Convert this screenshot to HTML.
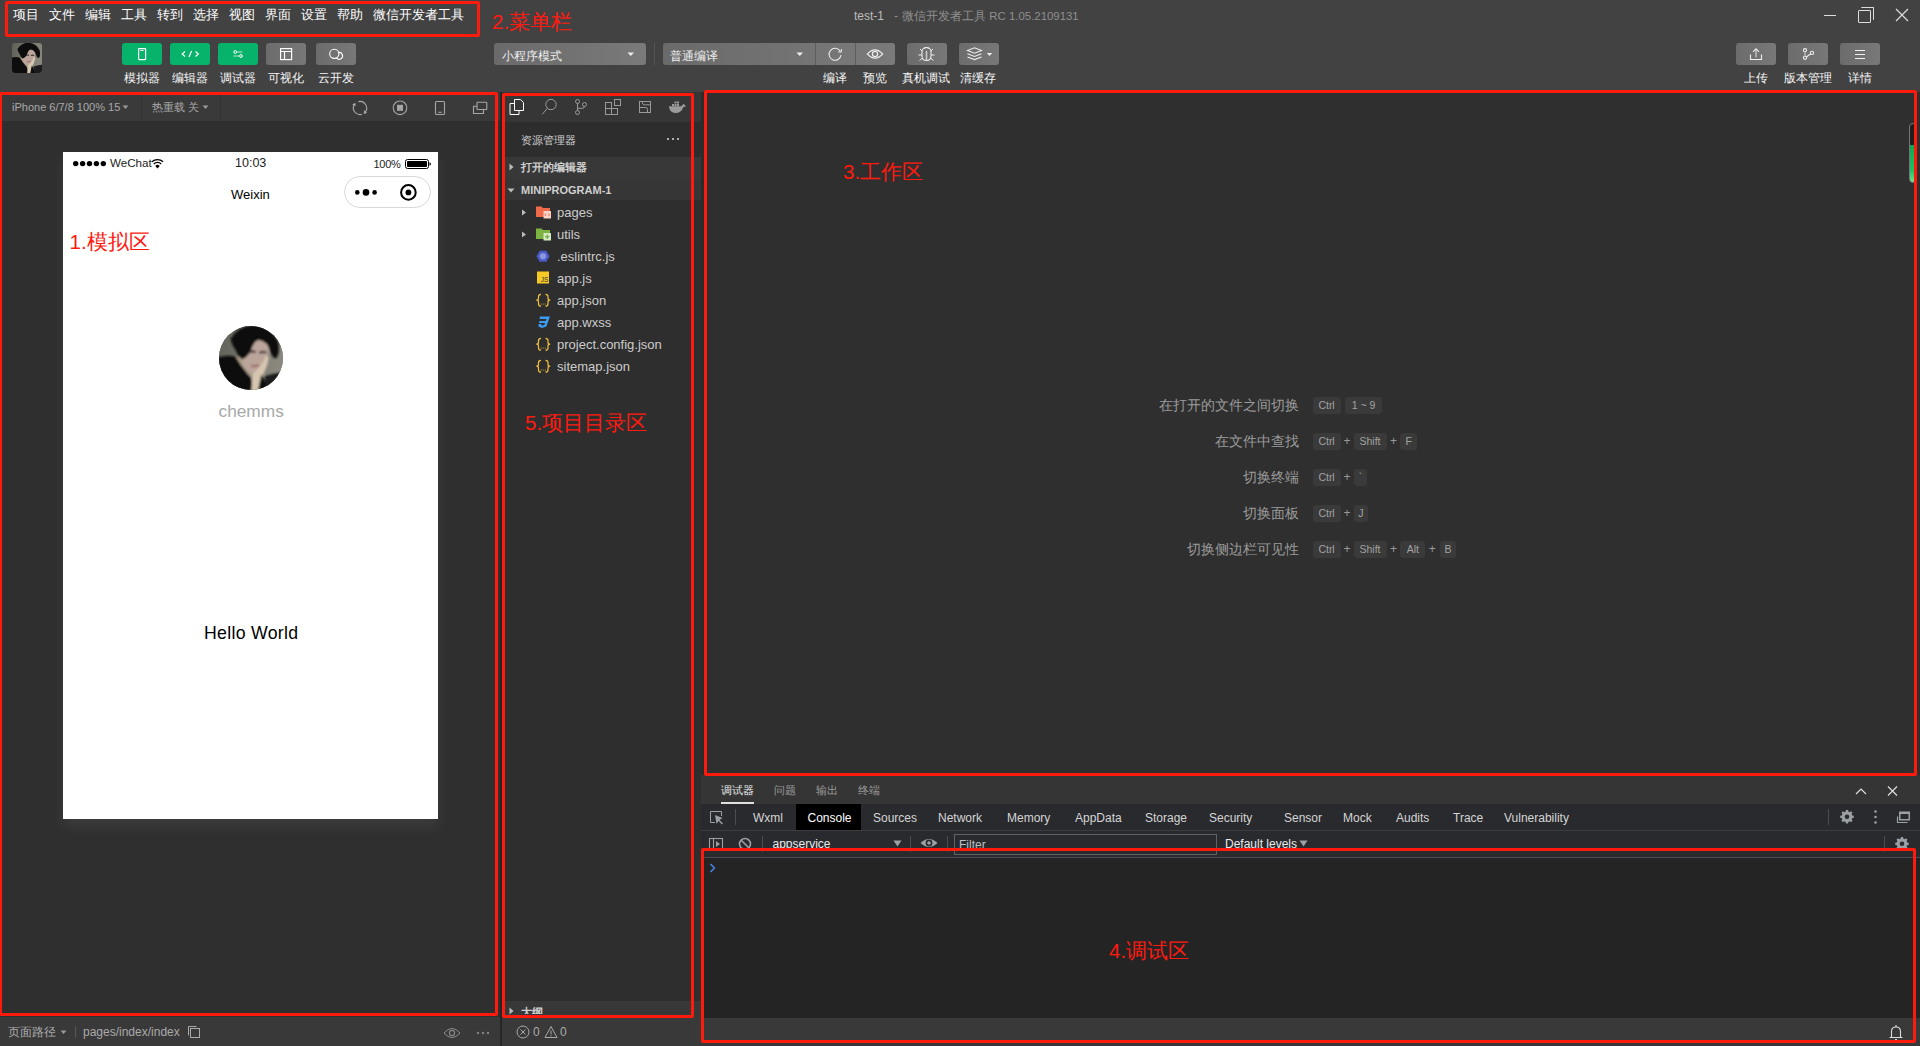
<!DOCTYPE html>
<html><head><meta charset="utf-8">
<style>
*{box-sizing:border-box}
html,body{margin:0;padding:0;width:1920px;height:1046px;overflow:hidden;background:#2f2f2f;font-family:"Liberation Sans",sans-serif;color:#ccc}
.a{position:absolute}
.t{position:absolute;white-space:nowrap;line-height:1}
.btn{position:absolute;top:43px;width:40px;height:22px;border-radius:3px;background:linear-gradient(90deg,#6c6c6c,#787878)}
.g{background:#07b36a}
.lbl{position:absolute;top:72px;font-size:12px;color:#f6f6f6;white-space:nowrap;line-height:12px;transform:translateX(-50%)}
.redbox{position:absolute;border:3px solid #ff1a0e;border-radius:2px}
.redlbl{position:absolute;color:#ff1a10;font-size:20.5px;line-height:1;white-space:nowrap}
.key{position:absolute;height:17px;border-radius:3px;background:#3a3a3a;color:#a3a3a3;font-size:10.5px;line-height:17px;text-align:center;white-space:nowrap}
.dt{top:812px;font-size:12px;color:#d5d5d5}
.menu span{position:absolute;top:8px;font-size:13px;line-height:13px;color:#fff}
</style></head><body>

<!-- header -->
<div class="a" style="left:0;top:0;width:1920px;height:92px;background:#424242"></div>
<div class="menu">
<span style="left:13px">项目</span><span style="left:49px">文件</span><span style="left:85px">编辑</span><span style="left:121px">工具</span><span style="left:157px">转到</span><span style="left:193px">选择</span><span style="left:229px">视图</span><span style="left:265px">界面</span><span style="left:301px">设置</span><span style="left:337px">帮助</span><span style="left:373px">微信开发者工具</span>
</div>
<div class="t" style="left:854px;top:10px;font-size:12px;color:#bdbdbd">test-1<span style="position:absolute;left:40px;color:#8f8f8f">-</span><span style="position:absolute;left:48px;color:#8f8f8f">微信开发者工具 <span style="font-size:11.4px">RC 1.05.2109131</span></span></div>

<!-- window controls -->
<div class="a" style="left:1824px;top:14.5px;width:12px;height:1.5px;background:#ddd"></div>
<div class="a" style="left:1858px;top:10px;width:13px;height:13px;border:1.5px solid #ddd;border-radius:1px"></div>
<div class="a" style="left:1861px;top:7px;width:13px;height:13px;border-top:1.5px solid #ddd;border-right:1.5px solid #ddd;border-radius:1px"></div>
<svg class="a" style="left:1895px;top:8px" width="14" height="14" viewBox="0 0 14 14"><path d="M1 1L13 13M13 1L1 13" stroke="#ddd" stroke-width="1.2"/></svg>

<!-- avatar -->
<div class="a" style="left:12px;top:43px;width:30px;height:30px;border-radius:3px;overflow:hidden">
<svg width="30" height="30" viewBox="0 0 100 100" preserveAspectRatio="none"><defs><filter id="blra" x="-10%" y="-10%" width="120%" height="120%"><feGaussianBlur stdDeviation="2.5"/></filter>
<linearGradient id="bgga" x1="0" y1="0" x2="1" y2="0.3"><stop offset="0" stop-color="#5f6058"/><stop offset="0.6" stop-color="#77776c"/><stop offset="1" stop-color="#8a887e"/></linearGradient></defs>
<rect width="100" height="100" fill="url(#bgga)"/>
<g filter="url(#blra)">
<path d="M72 78 Q85 74 105 72 L105 105 L70 105Z" fill="#1e1e1e"/>
<path d="M24 48 Q40 48 52 60 Q56 72 54 78 Q42 80 30 72Z" fill="#a99b86"/>
<path d="M40 26 Q60 14 76 26 Q80 45 74 62 Q66 76 52 74 Q40 70 36 56Z" fill="#bba59b"/>
<path d="M-5 50 Q12 44 26 48 Q34 62 44 74 Q52 80 56 105 L-5 105Z" fill="#0d0d0d"/>
<path d="M50 105 Q52 88 52 76 Q56 70 62 66 Q68 58 74 46 L78 50 Q74 70 66 80 Q62 88 66 105Z" fill="#d6c6b0"/>
<path d="M66 76 Q72 82 76 105 L60 105Z" fill="#0f0f0f"/>
<path d="M18 20 Q30 0 55 -2 Q82 2 92 24 Q96 40 90 50 Q84 52 80 40 Q76 24 62 22 Q54 24 50 38 Q44 50 36 52 Q30 48 26 38 Q20 30 18 20Z" fill="#0b0b0b"/>
<path d="M46 42 Q52 38 57 41" stroke="#3d302c" stroke-width="3.5" fill="none"/>
<path d="M63 42 Q69 39 74 42" stroke="#3d302c" stroke-width="3.5" fill="none"/>
<path d="M50 62 Q56 64 62 61" stroke="#9b6f6a" stroke-width="3.5" fill="none"/>
</g></svg>
</div>

<!-- toolbar left buttons -->
<div class="btn g" style="left:122px"></div>
<div class="btn g" style="left:170px"></div>
<div class="btn g" style="left:218px"></div>
<div class="btn" style="left:266px"></div>
<div class="btn" style="left:316px"></div>

<div class="lbl" style="left:142px">模拟器</div>
<div class="lbl" style="left:190px">编辑器</div>
<div class="lbl" style="left:238px">调试器</div>
<div class="lbl" style="left:286px">可视化</div>
<div class="lbl" style="left:336px">云开发</div>

<!-- dropdowns -->
<div class="a" style="left:494px;top:43px;width:152px;height:22px;border-radius:3px;background:linear-gradient(90deg,#6a6a6a,#7a7a7a)"></div>
<div class="t" style="left:502px;top:49.5px;font-size:12px;color:#eee">小程序模式</div>
<svg class="a" style="left:627px;top:52px" width="8" height="5"><path d="M0.5 0.5H7L3.75 4Z" fill="#eee"/></svg>
<div class="a" style="left:654px;top:43px;width:1px;height:22px;background:#555"></div>
<div class="a" style="left:663px;top:43px;width:232px;height:22px;border-radius:3px;background:linear-gradient(90deg,#6a6a6a,#7a7a7a)"></div>
<div class="a" style="left:815px;top:43px;width:1px;height:22px;background:#5e5e5e"></div>
<div class="a" style="left:855px;top:43px;width:1px;height:22px;background:#5e5e5e"></div>
<div class="t" style="left:670px;top:49.5px;font-size:12px;color:#eee">普通编译</div>
<svg class="a" style="left:796px;top:52px" width="8" height="5"><path d="M0.5 0.5H7L3.75 4Z" fill="#eee"/></svg>
<div class="btn" style="left:907px"></div>
<div class="btn" style="left:959px"></div>
<div class="lbl" style="left:835px">编译</div>
<div class="lbl" style="left:875px">预览</div>
<div class="lbl" style="left:926px">真机调试</div>
<div class="lbl" style="left:978px">清缓存</div>

<div class="btn" style="left:1736px"></div>
<div class="btn" style="left:1788px"></div>
<div class="btn" style="left:1840px"></div>
<svg class="a" style="left:1700px;top:0" width="220" height="92" viewBox="1700 0 220 92" fill="none" stroke="#f0f0f0" stroke-width="1.1">
<path d="M1750.5 54.5V59.5H1761.5V54.5"/>
<path d="M1756 57.2V49.5" stroke="#bbb" stroke-width="1.6"/>
<path d="M1753 51.8L1756 48.8L1759 51.8"/>
<circle cx="1805" cy="50.2" r="1.6"/><circle cx="1805" cy="57.8" r="1.6"/><circle cx="1812" cy="52.9" r="1.6"/>
<path d="M1805 51.8V56.2" stroke="#bbb" stroke-width="1.4"/><path d="M1806.4 57L1810.6 53.8"/>
<path d="M1855 50.5H1865M1855 54.5H1865M1855 58.5H1865"/>
</svg>
<div class="lbl" style="left:1756px">上传</div>
<div class="lbl" style="left:1808px">版本管理</div>
<div class="lbl" style="left:1860px">详情</div>

<svg class="a" style="left:0;top:0;z-index:2" width="1000" height="92" viewBox="0 0 1000 92" fill="none" stroke="#fff" stroke-width="1.2">
<rect x="138.6" y="48.6" width="7" height="11" rx="0.5"/>
<path d="M140.5 50.5H143.5" stroke-width="1"/>
<path d="M185 51.5L182.2 54L185 56.5M195.5 51.5L198.3 54L195.5 56.5M191.6 51L188.9 57"/>
<path d="M236.7 52H242.3M233.3 56H239.5" stroke="#bfe9d2" stroke-width="1"/>
<circle cx="235.2" cy="52" r="1.4" stroke-width="1"/><circle cx="241" cy="56" r="1.4" stroke-width="1"/>
<rect x="280.6" y="48.6" width="11" height="11"/>
<path d="M280.6 51.5H291.6M284.5 51.5V59.6"/>
<circle cx="334.3" cy="53.8" r="4.6" stroke-width="1.1"/><path d="M338.2 52.6A3.4 3.4 0 1 1 336.5 58" stroke-width="1.1"/>
<path d="M840.2 51.2A6 6 0 1 0 841 55" stroke="#ececec" stroke-width="1.1"/>
<path d="M838.3 51.8L841 52.2L841.6 49.2" stroke="#ececec" stroke-width="1.1"/>
<path d="M867.3 54Q875 45.8 882.7 54Q875 62.2 867.3 54Z" stroke="#ececec" stroke-width="1.1"/>
<circle cx="875" cy="54" r="2.6" stroke="#ececec" stroke-width="1.2"/>
<path d="M922 51.5A4.5 4 0 0 1 931 51.5V56Q931 60.5 926.5 60.5Q922 60.5 922 56Z" stroke="#ececec" stroke-width="1.1"/>
<path d="M926.5 51V60" stroke="#ccc" stroke-width="1.6"/>
<path d="M923.5 48.5Q926.5 46.5 929.5 48.5M920 49L922.2 51.2M933 49L930.8 51.2M918.5 55H922M931 55H934.5M919.5 60.5L922.5 58M933.5 60.5L930.5 58" stroke="#ececec" stroke-width="1"/>
<path d="M967.5 50.5L974.5 47.8L981.5 50.5L974.5 53.2Z" stroke="#ececec" stroke-width="1.1"/>
<path d="M967.5 53.7L974.5 56.4L981.5 53.7M967.5 56.9L974.5 59.6L981.5 56.9" stroke="#ececec" stroke-width="1.1"/>
<path d="M986.8 53H992.2L989.5 56Z" fill="#eee" stroke="none"/>
</svg>
<!-- simulator panel -->
<div class="a" style="left:0;top:92px;width:500px;height:30px;background:#3a3a3a"></div>
<div class="a" style="left:0;top:121px;width:500px;height:896px;background:#2f2f2f"></div>
<div class="t" style="left:12px;top:102px;font-size:11px;color:#a9a9a9">iPhone 6/7/8 100% 15</div>
<svg class="a" style="left:122px;top:105px" width="8" height="5"><path d="M0.5 0.5H6.5L3.5 4Z" fill="#999"/></svg>
<div class="a" style="left:141px;top:95px;width:1px;height:27px;background:#333"></div>
<div class="t" style="left:152px;top:102px;font-size:11px;color:#a9a9a9">热重载 关</div>
<svg class="a" style="left:202px;top:105px" width="8" height="5"><path d="M0.5 0.5H6.5L3.5 4Z" fill="#999"/></svg>
<div class="a" style="left:220px;top:95px;width:1px;height:27px;background:#333"></div>
<svg class="a" style="left:340px;top:92px" width="160" height="30" viewBox="340 92 160 30" fill="none" stroke="#a6a6a6" stroke-width="1.1">
<path d="M358.29 101.62A6.6 6.6 0 0 1 365.06 112.24"/><path d="M361.71 114.38A6.6 6.6 0 0 1 354.28 104.70"/>
<path d="M363.64 113.93L367.10 112.92L364.04 110.34Z" fill="#a6a6a6" stroke="none"/><path d="M355.38 102.79L352.15 104.39L355.62 106.39Z" fill="#a6a6a6" stroke="none"/>
<circle cx="400" cy="107.8" r="6.8"/><rect x="397" y="104.8" width="6" height="6" fill="#a6a6a6" stroke="none"/>
<rect x="435.5" y="101.5" width="9" height="13" rx="1"/><path d="M438.3 112.3H441.7"/>
<rect x="477" y="102.3" width="9.8" height="7.2" rx="0.5"/><path d="M477 106.3H473.5V113.5H483.5V109.5"/>
</svg>

<!-- phone -->
<div class="a" style="left:63px;top:152px;width:375px;height:667px;background:#fff;box-shadow:0 7px 14px rgba(255,255,255,.07)"></div>
<svg class="a" style="left:63px;top:152px" width="375" height="70" viewBox="63 152 375 70">
<circle cx="75.7" cy="163.6" r="2.7" fill="#000"/><circle cx="82.6" cy="163.6" r="2.7" fill="#000"/><circle cx="89.5" cy="163.6" r="2.7" fill="#000"/><circle cx="96.4" cy="163.6" r="2.7" fill="#000"/><circle cx="103.3" cy="163.6" r="2.7" fill="#000"/>
<path d="M152 161.8A8 8 0 0 1 163 161.8" stroke="#000" stroke-width="1.4" fill="none"/>
<path d="M153.8 163.9A5.2 5.2 0 0 1 161.2 163.9" stroke="#000" stroke-width="1.4" fill="none"/>
<path d="M155.3 166L157.5 168.4L159.7 166A3 3 0 0 0 155.3 166Z" fill="#000"/>
<rect x="405.5" y="159.5" width="23" height="9" rx="2" fill="none" stroke="#000" stroke-width="1"/>
<rect x="407" y="161" width="20" height="6" rx="0.8" fill="#000"/>
<path d="M429.5 162.2Q431 163 431 164Q431 165 429.5 165.8Z" fill="#000"/>
<rect x="344.5" y="176.5" width="86" height="31" rx="15.5" fill="#fff" stroke="#d9d9d9" stroke-width="1"/>
<circle cx="357.3" cy="192.4" r="2.3" fill="#000"/><circle cx="366" cy="192.4" r="3.3" fill="#000"/><circle cx="374.6" cy="192.4" r="2.3" fill="#000"/>
<circle cx="408.4" cy="192.4" r="7.3" fill="none" stroke="#000" stroke-width="2"/><circle cx="408.4" cy="192.4" r="2.9" fill="#000"/>
</svg>
<div class="t" style="left:110px;top:156.5px;font-size:11.6px;color:#222">WeChat</div>
<div class="t" style="left:235px;top:157px;font-size:12.5px;color:#222">10:03</div>
<div class="t" style="left:373.5px;top:158.5px;font-size:11px;letter-spacing:-0.3px;color:#222">100%</div>
<div class="t" style="left:231px;top:188px;font-size:13px;color:#000">Weixin</div>
<div class="a" style="left:219px;top:326px;width:64px;height:64px;border-radius:50%;overflow:hidden;background:#6f6d66">
<svg width="64" height="64" viewBox="0 0 100 100"><defs><filter id="blrb" x="-10%" y="-10%" width="120%" height="120%"><feGaussianBlur stdDeviation="1.5"/></filter>
<linearGradient id="bggb" x1="0" y1="0" x2="1" y2="0.3"><stop offset="0" stop-color="#5f6058"/><stop offset="0.6" stop-color="#77776c"/><stop offset="1" stop-color="#8a887e"/></linearGradient></defs>
<rect width="100" height="100" fill="url(#bggb)"/>
<g filter="url(#blrb)">
<path d="M72 78 Q85 74 105 72 L105 105 L70 105Z" fill="#1e1e1e"/>
<path d="M24 48 Q40 48 52 60 Q56 72 54 78 Q42 80 30 72Z" fill="#a99b86"/>
<path d="M40 26 Q60 14 76 26 Q80 45 74 62 Q66 76 52 74 Q40 70 36 56Z" fill="#bba59b"/>
<path d="M-5 50 Q12 44 26 48 Q34 62 44 74 Q52 80 56 105 L-5 105Z" fill="#0d0d0d"/>
<path d="M50 105 Q52 88 52 76 Q56 70 62 66 Q68 58 74 46 L78 50 Q74 70 66 80 Q62 88 66 105Z" fill="#d6c6b0"/>
<path d="M66 76 Q72 82 76 105 L60 105Z" fill="#0f0f0f"/>
<path d="M18 20 Q30 0 55 -2 Q82 2 92 24 Q96 40 90 50 Q84 52 80 40 Q76 24 62 22 Q54 24 50 38 Q44 50 36 52 Q30 48 26 38 Q20 30 18 20Z" fill="#0b0b0b"/>
<path d="M46 42 Q52 38 57 41" stroke="#3d302c" stroke-width="3.5" fill="none"/>
<path d="M63 42 Q69 39 74 42" stroke="#3d302c" stroke-width="3.5" fill="none"/>
<path d="M50 62 Q56 64 62 61" stroke="#9b6f6a" stroke-width="3.5" fill="none"/>
</g></svg></div>
<div class="t" style="left:218.5px;top:402.5px;font-size:17.3px;color:#a8a8a8">chemms</div>
<div class="t" style="left:204px;top:624.5px;font-size:17.7px;letter-spacing:0.3px;color:#000">Hello World</div>

<div class="a" style="left:0;top:1017px;width:500px;height:29px;background:#393939"></div>
<div class="t" style="left:8px;top:1026px;font-size:12px;color:#aaa">页面路径</div>
<svg class="a" style="left:60px;top:1030px" width="8" height="5"><path d="M0.5 0.5H6.5L3.5 4Z" fill="#999"/></svg>
<div class="a" style="left:75px;top:1026px;width:1px;height:12px;background:#555"></div>
<div class="t" style="left:83px;top:1026px;font-size:12px;color:#aaa">pages/index/index</div>
<svg class="a" style="left:187px;top:1025px" width="14" height="14" fill="none" stroke="#aaa" stroke-width="1"><path d="M1.5 10.5V1.5H9.5"/><rect x="3.5" y="3.5" width="9" height="9"/></svg>
<svg class="a" style="left:440px;top:1026px" width="60" height="14" fill="none" stroke="#8a8a8a" stroke-width="1"><path d="M4 7Q12 -2.2 20 7Q12 16.2 4 7Z"/><circle cx="12" cy="7" r="2.6" stroke-width="1.1"/><circle cx="38" cy="7" r="0.8" fill="#999"/><circle cx="43" cy="7" r="0.8" fill="#999"/><circle cx="48" cy="7" r="0.8" fill="#999"/></svg>
<div class="a" style="left:500px;top:92px;width:2px;height:954px;background:#262626"></div>

<!-- explorer -->
<div class="a" style="left:502px;top:92px;width:199px;height:30px;background:#363636"></div>
<div class="a" style="left:502px;top:122px;width:199px;height:35px;background:#2d2d2d"></div>
<div class="a" style="left:502px;top:157px;width:199px;height:22px;background:#383838"></div>
<div class="a" style="left:502px;top:179px;width:199px;height:21px;background:#363636"></div>
<div class="a" style="left:502px;top:200px;width:199px;height:801px;background:#2e2e2e"></div>
<div class="a" style="left:502px;top:1001px;width:199px;height:16px;background:#383838"></div>
<div class="a" style="left:502px;top:1017px;width:199px;height:29px;background:#393939"></div>
<div class="a" style="left:701px;top:92px;width:3px;height:925px;background:#2b2b2b"></div>
<svg class="a" style="left:502px;top:92px" width="198" height="30" viewBox="502 92 198 30" fill="none" stroke="#9a9a9a" stroke-width="1">
<path d="M514.5 103.5H510V114.5H519V110.5" stroke="#fff"/>
<path d="M514.5 110.5V99.5H520.5L523.5 102.5V110.5Z" stroke="#fff"/>
<circle cx="551" cy="104.5" r="5.2"/><path d="M547.3 108.3L542.3 114.3"/>
<circle cx="577.5" cy="101.5" r="2"/><circle cx="577.5" cy="112.5" r="2"/><circle cx="584.5" cy="104.5" r="2"/>
<path d="M577.5 103.5V110.5M584.5 106.5Q584.5 108.3 582.5 108.3H577.5"/>
<rect x="605.5" y="102.5" width="6" height="6"/><rect x="605.5" y="108.5" width="6" height="6"/><rect x="611.5" y="108.5" width="6" height="6"/><rect x="614.5" y="99.5" width="6" height="6"/>
<rect x="639.5" y="101.5" width="11" height="11"/>
<path d="M642.5 101.5V103Q642.5 104.8 644.5 104.8H650.5M639.5 107.5H645.5Q647.5 107.5 647.5 109.3V112.5" stroke-width="1"/>
<path d="M669 106.3H681.3L683.6 103.8L686 106.3L683.2 107.2Q681.5 113 675.5 113Q669.2 113 669 106.3Z" fill="#9a9a9a" stroke="none"/>
<rect x="672" y="104" width="2" height="2" fill="#9a9a9a" stroke="none"/><rect x="674.5" y="104" width="2" height="2" fill="#9a9a9a" stroke="none"/><rect x="677" y="104" width="2" height="2" fill="#9a9a9a" stroke="none"/><rect x="674.5" y="101.5" width="2" height="2" fill="#9a9a9a" stroke="none"/><rect x="677" y="101.5" width="2" height="2" fill="#9a9a9a" stroke="none"/>
</svg>
<div class="t" style="left:521px;top:135px;font-size:11px;color:#cfcfcf">资源管理器</div>
<svg class="a" style="left:665px;top:137px" width="18" height="4"><circle cx="3" cy="2" r="1" fill="#ddd"/><circle cx="8" cy="2" r="1" fill="#ddd"/><circle cx="13" cy="2" r="1" fill="#ddd"/></svg>
<svg class="a" style="left:508px;top:163px" width="8" height="8"><path d="M1.5 0.5L5.5 4L1.5 7.5Z" fill="#bbb"/></svg>
<div class="t" style="left:521px;top:162px;font-size:11px;font-weight:bold;color:#cfcfcf">打开的编辑器</div>
<svg class="a" style="left:507px;top:187px" width="8" height="8"><path d="M0.5 1.5H7.5L4 5.5Z" fill="#bbb"/></svg>
<div class="t" style="left:521px;top:185px;font-size:11px;font-weight:bold;color:#cfcfcf">MINIPROGRAM-1</div>

<svg class="a" style="left:520px;top:200px" width="40" height="180" viewBox="520 200 40 180">
<path d="M522 209.5L526 212.5L522 215.5Z" fill="#bbb"/>
<path d="M522 231.5L526 234.5L522 237.5Z" fill="#bbb"/>
<path d="M536 206.5H541.5L543 208H550V217H536Z" fill="#f06a4a"/>
<rect x="543.5" y="211" width="7.5" height="7.5" rx="0.5" fill="#fad2c6"/><path d="M546 213.5L545 214.8L546 216M548.5 213.5L549.5 214.8L548.5 216" stroke="#e44d30" stroke-width="0.8" fill="none"/>
<path d="M536 228.5H541.5L543 230H550V239H536Z" fill="#7cb342"/>
<rect x="543.5" y="233" width="7.5" height="7.5" rx="0.5" fill="#d6ebc4"/><path d="M547.2 234.5V239M545 236.8H549.5" stroke="#689f38" stroke-width="1" fill="none"/>
<path d="M536.5 256.3L539.7 250.8H546.3L549.5 256.3L546.3 261.8H539.7Z" fill="#4a5bc8"/><path d="M539.4 256.3L541.2 253.3H544.8L546.6 256.3L544.8 259.3H541.2Z" fill="#8b96e0"/>
<rect x="537" y="271.5" width="12" height="12" fill="#f7c926"/><text x="548.3" y="282.3" text-anchor="end" font-size="6.5" font-family="Liberation Sans" fill="#333">JS</text>
</svg>
<div class="t" style="left:557px;top:206px;font-size:13px;color:#cccccc">pages</div>
<div class="t" style="left:557px;top:228px;font-size:13px;color:#cccccc">utils</div>
<div class="t" style="left:557px;top:250px;font-size:13px;color:#cccccc">.eslintrc.js</div>
<div class="t" style="left:557px;top:272px;font-size:13px;color:#cccccc">app.js</div>
<svg class="a" style="left:0;top:0" width="700" height="400"><g transform="translate(0,0)"><path d="M541 294.3Q538.5 294.3 538.5 296.5V298.6Q538.5 300.2 536.3 300.2Q538.5 300.2 538.5 301.8V303.9Q538.5 306.1 541 306.1M545.5 294.3Q548 294.3 548 296.5V298.6Q548 300.2 550.2 300.2Q548 300.2 548 301.8V303.9Q548 306.1 545.5 306.1" fill="none" stroke="#f0c040" stroke-width="1.2"/><circle cx="541.3" cy="304" r="0.6" fill="#d8b050"/><circle cx="543.25" cy="304" r="0.6" fill="#d8b050"/><circle cx="545.2" cy="304" r="0.6" fill="#d8b050"/></g><g transform="translate(0,44)"><path d="M541 294.3Q538.5 294.3 538.5 296.5V298.6Q538.5 300.2 536.3 300.2Q538.5 300.2 538.5 301.8V303.9Q538.5 306.1 541 306.1M545.5 294.3Q548 294.3 548 296.5V298.6Q548 300.2 550.2 300.2Q548 300.2 548 301.8V303.9Q548 306.1 545.5 306.1" fill="none" stroke="#f0c040" stroke-width="1.2"/><circle cx="541.3" cy="304" r="0.6" fill="#d8b050"/><circle cx="543.25" cy="304" r="0.6" fill="#d8b050"/><circle cx="545.2" cy="304" r="0.6" fill="#d8b050"/></g><g transform="translate(0,66)"><path d="M541 294.3Q538.5 294.3 538.5 296.5V298.6Q538.5 300.2 536.3 300.2Q538.5 300.2 538.5 301.8V303.9Q538.5 306.1 541 306.1M545.5 294.3Q548 294.3 548 296.5V298.6Q548 300.2 550.2 300.2Q548 300.2 548 301.8V303.9Q548 306.1 545.5 306.1" fill="none" stroke="#f0c040" stroke-width="1.2"/><circle cx="541.3" cy="304" r="0.6" fill="#d8b050"/><circle cx="543.25" cy="304" r="0.6" fill="#d8b050"/><circle cx="545.2" cy="304" r="0.6" fill="#d8b050"/></g></svg>
<div class="t" style="left:557px;top:294px;font-size:13px;color:#cccccc">app.json</div>
<svg class="a" style="left:536px;top:315px;transform:skewX(-14deg)" width="15" height="14" viewBox="0 0 14 14"><path d="M2 1.5H12L11 11.5L7 13L3 11.5L2.8 9H5.2L5.4 10L7 10.6L8.6 10L8.8 8H2.8L2.6 6H9L9.2 4H2.3Z" fill="#3b9cf4"/></svg>
<div class="t" style="left:557px;top:316px;font-size:13px;color:#cccccc">app.wxss</div>
<div class="t" style="left:557px;top:338px;font-size:13px;color:#cccccc">project.config.json</div>
<div class="t" style="left:557px;top:360px;font-size:13px;color:#cccccc">sitemap.json</div>

<svg class="a" style="left:509px;top:1007px" width="6" height="8"><path d="M0.5 0.5L4.5 4L0.5 7.5Z" fill="#bbb"/></svg>
<div class="a" style="left:502px;top:1001px;width:192px;height:13px;overflow:hidden"><div class="t" style="left:19px;top:6px;font-size:11px;font-weight:bold;color:#cfcfcf">大纲</div></div>
<svg class="a" style="left:514px;top:1024px" width="60" height="16" fill="none" stroke="#aaa" stroke-width="1"><circle cx="9" cy="8" r="6"/><path d="M6.5 5.5L11.5 10.5M11.5 5.5L6.5 10.5"/><path d="M37 2.5L43 13.5H31Z"/><path d="M37 6.5V10.5M37 11.5V12.5"/></svg>
<div class="t" style="left:533px;top:1026px;font-size:12px;color:#aaa">0</div>
<div class="t" style="left:560px;top:1026px;font-size:12px;color:#aaa">0</div>

<!-- editor -->
<div class="a" style="left:704px;top:92px;width:1216px;height:683px;background:#2f2f2f"></div>
<div class="t" style="right:621.5px;top:398.6px;font-size:13.5px;color:#9b9b9b">在打开的文件之间切换</div>
<div class="key" style="left:1312.5px;top:396.9px;width:28.09999999999991px">Ctrl</div>
<div class="key" style="left:1345.4px;top:396.9px;width:36.299999999999955px">1 ~ 9</div>
<div class="t" style="right:621.5px;top:435.0px;font-size:13.5px;color:#9b9b9b">在文件中查找</div>
<div class="key" style="left:1312.5px;top:433.3px;width:28.09999999999991px">Ctrl</div>
<div class="t" style="left:1342.9px;top:435px;font-size:12px;color:#999;width:8px;text-align:center">+</div>
<div class="key" style="left:1353.5px;top:433.3px;width:33.0px">Shift</div>
<div class="t" style="left:1389.5px;top:435px;font-size:12px;color:#999;width:8px;text-align:center">+</div>
<div class="key" style="left:1400.4px;top:433.3px;width:16.59999999999991px">F</div>
<div class="t" style="right:621.5px;top:470.6px;font-size:13.5px;color:#9b9b9b">切换终端</div>
<div class="key" style="left:1312.5px;top:468.9px;width:28.09999999999991px">Ctrl</div>
<div class="t" style="left:1342.9px;top:470.6px;font-size:12px;color:#999;width:8px;text-align:center">+</div>
<div class="key" style="left:1353.5px;top:468.9px;width:13.799999999999955px">`</div>
<div class="t" style="right:621.5px;top:506.6px;font-size:13.5px;color:#9b9b9b">切换面板</div>
<div class="key" style="left:1312.5px;top:504.9px;width:28.09999999999991px">Ctrl</div>
<div class="t" style="left:1342.9px;top:506.6px;font-size:12px;color:#999;width:8px;text-align:center">+</div>
<div class="key" style="left:1353.5px;top:504.9px;width:14.5px">J</div>
<div class="t" style="right:621.5px;top:542.5px;font-size:13.5px;color:#9b9b9b">切换侧边栏可见性</div>
<div class="key" style="left:1312.5px;top:540.8px;width:28.09999999999991px">Ctrl</div>
<div class="t" style="left:1342.9px;top:542.5px;font-size:12px;color:#999;width:8px;text-align:center">+</div>
<div class="key" style="left:1353.5px;top:540.8px;width:33.0px">Shift</div>
<div class="t" style="left:1389.5px;top:542.5px;font-size:12px;color:#999;width:8px;text-align:center">+</div>
<div class="key" style="left:1400.4px;top:540.8px;width:25.0px">Alt</div>
<div class="t" style="left:1428.3px;top:542.5px;font-size:12px;color:#999;width:8px;text-align:center">+</div>
<div class="key" style="left:1439.6px;top:540.8px;width:16.65000000000009px">B</div>
<div class="a" style="left:1909px;top:123px;width:8px;height:60px;border-radius:4px;border:1px solid #777;background:linear-gradient(#1e1e1e 0,#1e1e1e 36%,#0fa84e 37%,#1fc060 80%,#6fe28f 100%)"></div>

<!-- debugger -->
<div class="a" style="left:701px;top:775px;width:1219px;height:29px;background:#353535"></div>
<div class="t" style="left:721px;top:785px;font-size:11px;color:#e8e8e8">调试器</div>
<div class="a" style="left:721px;top:802px;width:33px;height:2px;background:#e0e0e0"></div>
<div class="t" style="left:774px;top:785px;font-size:11px;color:#9a9a9a">问题</div>
<div class="t" style="left:816px;top:785px;font-size:11px;color:#9a9a9a">输出</div>
<div class="t" style="left:858px;top:785px;font-size:11px;color:#9a9a9a">终端</div>
<svg class="a" style="left:1850px;top:782px" width="60" height="18" fill="none" stroke="#ddd" stroke-width="1.2"><path d="M6 12L11 7L16 12"/><path d="M38 4.5L47 13.5M47 4.5L38 13.5"/></svg>

<div class="a" style="left:701px;top:804px;width:1219px;height:26px;background:#292a2d"></div>
<div class="a" style="left:796px;top:804px;width:65px;height:26px;background:#000"></div>
<svg class="a" style="left:705px;top:808px" width="30" height="20" fill="none" stroke="#9aa0a6" stroke-width="1"><path d="M10 14.5H5.5V3.5H16.5V8"/><path d="M10 7L11.5 16L13.5 13L17 16.5L18 15.5L14.5 12L17.5 10Z" fill="#9aa0a6" stroke="none"/></svg>
<div class="a" style="left:735px;top:809px;width:1px;height:16px;background:#4a4c50"></div>
<div class="t dt" style="left:753px">Wxml</div>
<div class="t dt" style="left:807.5px;color:#fff">Console</div>
<div class="t dt" style="left:873px">Sources</div>
<div class="t dt" style="left:938px">Network</div>
<div class="t dt" style="left:1007px">Memory</div>
<div class="t dt" style="left:1075px">AppData</div>
<div class="t dt" style="left:1145px">Storage</div>
<div class="t dt" style="left:1209px">Security</div>
<div class="t dt" style="left:1284px">Sensor</div>
<div class="t dt" style="left:1343px">Mock</div>
<div class="t dt" style="left:1396px">Audits</div>
<div class="t dt" style="left:1453px">Trace</div>
<div class="t dt" style="left:1504px">Vulnerability</div>
<div class="a" style="left:1828px;top:809px;width:1px;height:16px;background:#4a4c50"></div>
<svg class="a" style="left:1836px;top:807px" width="80" height="20">
<g transform="translate(11,10)" fill="#9aa0a6"><path d="M-1.2 -6.5H1.2L1.6 -4.6L3.2 -3.9L4.8 -5L6.5 -3.3L5.4 -1.7L6.1 -0.1L8 0.3V2.7L6.1 3.1L5.4 4.7L6.5 6.3L4.8 8L3.2 6.9L1.6 7.6L1.2 9.5H-1.2L-1.6 7.6L-3.2 6.9L-4.8 8L-6.5 6.3L-5.4 4.7L-6.1 3.1L-8 2.7V0.3L-6.1 -0.1L-5.4 -1.7L-6.5 -3.3L-4.8 -5L-3.2 -3.9L-1.6 -4.6Z" transform="translate(0,-1.5) scale(0.85)"/><circle cx="0" cy="-0.2" r="2.3" fill="#292a2d"/></g>
<circle cx="39.5" cy="4.5" r="1.3" fill="#9aa0a6"/><circle cx="39.5" cy="10" r="1.3" fill="#9aa0a6"/><circle cx="39.5" cy="15.5" r="1.3" fill="#9aa0a6"/>
<path d="M61.5 9.5V15.5H71.5" fill="none" stroke="#9aa0a6" stroke-width="1.2"/><rect x="63" y="4.5" width="11" height="9" fill="#9aa0a6"/><rect x="64.5" y="7" width="8" height="5" fill="#292a2d"/>
</svg>
<div class="a" style="left:701px;top:830px;width:1219px;height:1px;background:#3c3d40"></div>
<div class="a" style="left:701px;top:831px;width:1219px;height:26px;background:#292a2d"></div>
<svg class="a" style="left:705px;top:835px" width="50" height="18" fill="none" stroke="#9aa0a6" stroke-width="1.1"><rect x="4.5" y="3.5" width="13" height="11"/><path d="M8.5 3.5V14.5"/><path d="M11 6L15 9L11 12Z" fill="#9aa0a6" stroke="none"/><circle cx="40" cy="9" r="5.5" stroke-width="1.6"/><path d="M36.2 5.2L43.8 12.8" stroke-width="1.6"/></svg>
<div class="a" style="left:762px;top:836px;width:1px;height:16px;background:#4a4c50"></div>
<div class="t" style="left:772.5px;top:838px;font-size:12px;color:#e8eaed">appservice</div>
<svg class="a" style="left:893px;top:840px" width="9" height="7"><path d="M0.5 0.5H8.5L4.5 6.5Z" fill="#9aa0a6"/></svg>
<div class="a" style="left:910px;top:836px;width:1px;height:16px;background:#4a4c50"></div>
<svg class="a" style="left:919px;top:836px" width="20" height="14"><path d="M1.5 7Q10 -1 18.5 7Q10 15 1.5 7Z" fill="#9aa0a6"/><circle cx="10" cy="7" r="3.4" fill="#292a2d"/><circle cx="10" cy="7" r="1.8" fill="#9aa0a6"/></svg>
<div class="a" style="left:947px;top:836px;width:1px;height:16px;background:#4a4c50"></div>
<div class="a" style="left:954px;top:834px;width:263px;height:21px;border:1px solid #5f6368;background:transparent"></div>
<div class="t" style="left:959px;top:839px;font-size:12px;color:#bdc1c6">Filter</div>
<div class="t" style="left:1225px;top:838px;font-size:12px;color:#e8eaed">Default levels</div>
<svg class="a" style="left:1299px;top:840px" width="9" height="7"><path d="M0.5 0.5H8.5L4.5 6.5Z" fill="#9aa0a6"/></svg>
<div class="a" style="left:1884px;top:836px;width:1px;height:16px;background:#4a4c50"></div>
<svg class="a" style="left:1891px;top:834px" width="22" height="20"><g transform="translate(11,10)" fill="#9aa0a6"><path d="M-1.2 -6.5H1.2L1.6 -4.6L3.2 -3.9L4.8 -5L6.5 -3.3L5.4 -1.7L6.1 -0.1L8 0.3V2.7L6.1 3.1L5.4 4.7L6.5 6.3L4.8 8L3.2 6.9L1.6 7.6L1.2 9.5H-1.2L-1.6 7.6L-3.2 6.9L-4.8 8L-6.5 6.3L-5.4 4.7L-6.1 3.1L-8 2.7V0.3L-6.1 -0.1L-5.4 -1.7L-6.5 -3.3L-4.8 -5L-3.2 -3.9L-1.6 -4.6Z" transform="translate(0,-1.5) scale(0.85)"/><circle cx="0" cy="-0.2" r="2.3" fill="#292a2d"/></g></svg>
<div class="a" style="left:701px;top:857px;width:1219px;height:1px;background:#494c50"></div>
<div class="a" style="left:701px;top:858px;width:1219px;height:160px;background:#242424"></div>
<svg class="a" style="left:708px;top:862px" width="10" height="12"><path d="M2.5 2L6.5 6L2.5 10" fill="none" stroke="#4a8af4" stroke-width="1.4"/></svg>
<div class="a" style="left:701px;top:1018px;width:1219px;height:28px;background:#393939"></div>
<svg class="a" style="left:1888px;top:1024px" width="16" height="18" fill="none" stroke="#ddd" stroke-width="1.1"><path d="M3.5 13.5V7.5Q3.5 3 8 3Q12.5 3 12.5 7.5V13.5"/><path d="M1.5 13.5H14.5M8 1V3M7 15.5H9"/></svg>

<!-- red annotation boxes -->
<div class="redbox" style="left:-1px;top:92px;width:499px;height:924px"></div>
<div class="redbox" style="left:5px;top:1px;width:475px;height:36px"></div>
<div class="redbox" style="left:502px;top:93px;width:192px;height:925px"></div>
<div class="redbox" style="left:704px;top:90px;width:1213px;height:686px"></div>
<div class="redbox" style="left:701px;top:848px;width:1215px;height:195px"></div>

<div class="redlbl" style="left:69.5px;top:232px">1.模拟区</div>
<div class="redlbl" style="left:492px;top:11.5px">2.菜单栏</div>
<div class="redlbl" style="left:843px;top:162px">3.工作区</div>
<div class="redlbl" style="left:1109px;top:940.5px">4.调试区</div>
<div class="redlbl" style="left:525px;top:413px">5.项目目录区</div>

</body></html>
